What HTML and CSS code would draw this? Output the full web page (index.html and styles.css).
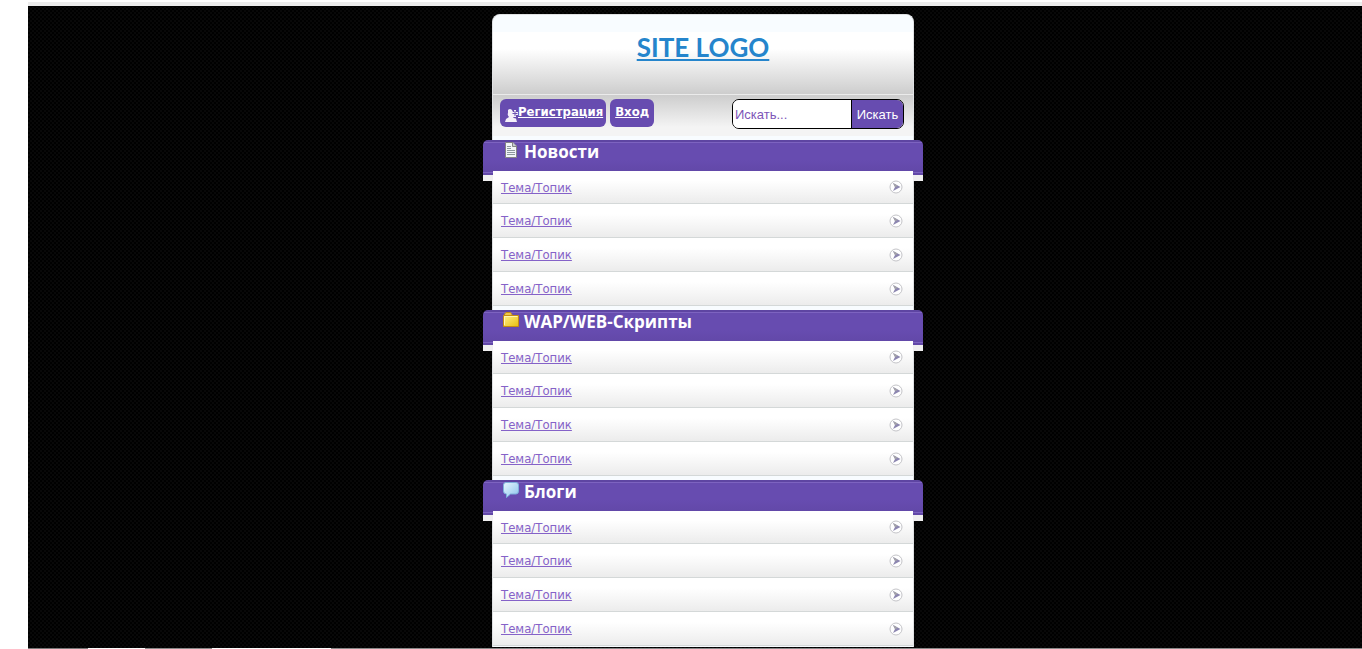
FILE: index.html
```html
<!DOCTYPE html>
<html lang="ru">
<head>
    <meta charset="UTF-8">
    <meta name="viewport" content="width=device-width, initial-scale=1.0">
    <title>Site logo</title>
    <link rel="stylesheet" href="styles.css">
</head>
<body>
    <svg class="sprite" aria-hidden="true">
        <symbol id="arrow" viewBox="0 0 14 14">
            <circle cx="7" cy="7" r="6" fill="#fff" stroke="#c4c4c8" stroke-width="1"/>
            <path d="M4 3L11.500 7L4 11L6 7Z" fill="#8c86b0"/>
            <path d="M4 3L8.500 5.500L7 7H6Z" fill="#a4a4a8"/>
        </symbol>
    </svg>
    <div class="stage">
        <div class="page">
            <div class="header">
                <a href="#" class="logo">SITE LOGO</a>
            </div>
            <div class="panel">
                <div class="user_menu">
                    <a href="#" class="btn">
                        <svg class="user" viewBox="0 0 13 13"><path d="M3 1Q5 -1 7 1L8 3H9V1H11V3H13V6H11V8H8Q8 9 11 9.500L12 13H0L1 10L4 8Q2 6 3 4Z" fill="#f4f0fa"/><path d="M10 2V7M7.500 4.500H12.500" stroke="#6a50b0" stroke-width="1"/></svg>Регистрация</a>
                    <a href="#" class="btn enter">Вход</a>
                </div>
                <form class="search">
                    <input type="text" placeholder="Искать..." aria-label="Искать">
                    <button type="submit">Искать</button>
                </form>
            </div>

            <div class="section">
                <h2 class="title">
                    <svg class="icon" viewBox="0 0 16 16"><path d="M2.500 .5H10L13.500 4V15.500H2.500Z" fill="#f2f6f8" stroke="#858585"/><path d="M9.500 1V4.500H13" fill="#c4ccd0" stroke="#858585"/><path d="M4 4.500H8M4 6.500H8M4 8.500H12M4 10.500H12M4 12.500H12" stroke="#8d989d"/></svg>
                    Новости
                </h2>
                <ul class="list">
                    <li><a href="#">Тема/Топик</a><svg class="arrow"><use href="#arrow"/></svg></li>
                    <li><a href="#">Тема/Топик</a><svg class="arrow"><use href="#arrow"/></svg></li>
                    <li><a href="#">Тема/Топик</a><svg class="arrow"><use href="#arrow"/></svg></li>
                    <li><a href="#">Тема/Топик</a><svg class="arrow"><use href="#arrow"/></svg></li>
                </ul>
            </div>

            <div class="section">
                <h2 class="title">
                    <svg class="icon" viewBox="0 0 16 16"><defs><linearGradient id="gold" x2="1" y2="1"><stop offset="0" stop-color="#fff08a"/><stop offset="1" stop-color="#e8be10"/></linearGradient></defs><path d="M1.500 3V2L3 .5H7.500L9 2.500V4H1.500Z" fill="#ecc64a" stroke="#c48c14"/><path d="M.5 3.500H15.500V14.500H.5Z" fill="url(#gold)" stroke="#c48c14"/><path d="M1.500 13V4.500H14.500" fill="none" stroke="#fff6b0"/></svg>
                    WAP/WEB-Скрипты
                </h2>
                <ul class="list">
                    <li><a href="#">Тема/Топик</a><svg class="arrow"><use href="#arrow"/></svg></li>
                    <li><a href="#">Тема/Топик</a><svg class="arrow"><use href="#arrow"/></svg></li>
                    <li><a href="#">Тема/Топик</a><svg class="arrow"><use href="#arrow"/></svg></li>
                    <li><a href="#">Тема/Топик</a><svg class="arrow"><use href="#arrow"/></svg></li>
                </ul>
            </div>

            <div class="section">
                <h2 class="title">
                    <svg class="icon" viewBox="0 0 16 16"><defs><linearGradient id="sky" x2="1" y2="1"><stop offset="0" stop-color="#e8f7ff"/><stop offset="1" stop-color="#8cc4ec"/></linearGradient></defs><path d="M3 .5H13Q15.500 .5 15.500 3V9Q15.500 12 13 12H7.500L3.500 15.500V12Q.5 12 .5 9V3Q.5 .5 3 .5Z" fill="url(#sky)" stroke="#7fb0dc"/></svg>
                    Блоги
                </h2>
                <ul class="list">
                    <li><a href="#">Тема/Топик</a><svg class="arrow"><use href="#arrow"/></svg></li>
                    <li><a href="#">Тема/Топик</a><svg class="arrow"><use href="#arrow"/></svg></li>
                    <li><a href="#">Тема/Топик</a><svg class="arrow"><use href="#arrow"/></svg></li>
                    <li><a href="#">Тема/Топик</a><svg class="arrow"><use href="#arrow"/></svg></li>
                </ul>
            </div>
        </div>
    </div>
    <div class="strip"></div>
</body>
</html>
```

FILE: styles.css
```css
*{
    margin: 0;
    padding: 0;
    box-sizing: border-box;
}
body{
    padding: 2px 0 0 28px;
    background: #fff;
    font-family: "DejaVu Sans Condensed", "DejaVu Sans", sans-serif;
    font-size: 13px;
}
.sprite{
    position: absolute;
    width: 0;
    height: 0;
}
.stage{
    padding: 8px 0 1px 16px;
    border-top: 4px solid #ececec;
    background: repeating-conic-gradient(#000 0 25%, #080808 0 50%) 0 0 / 4px 4px;
    box-shadow: inset 0 1px 0 #000;
}
.strip{
    height: 1px;
    background: linear-gradient(90deg, #777 60px, #fff 60px 117px, #888 117px 184px, #fff 184px 303px, #888 303px);
}
.page{
    width: 422px;
    max-width: 100%;
    margin: 0 auto;
    background: #f8fcff;
    border: solid #dfe1e3;
    border-width: 1px 1px 0;
    border-radius: 8px 8px 0 0;
}
.header{
    height: 80px;
    padding-top: 15px;
    text-align: center;
    border-bottom: 1px solid #ebebeb;
    background: linear-gradient(#f8fcff 17px, #fff 17px, #fff 34px, #cdcdcd);
    border-radius: 7px 7px 0 0;
}
.logo{
    font: bold 26px/34px "Lato", sans-serif;
    color: #2585cc;
}
.panel{
    height: 41px;
    padding: 4px 9px 0 7px;
    display: flex;
    justify-content: space-between;
    align-items: flex-start;
    background: linear-gradient(#cdcdcd, #f4f4f4 32px);
    margin-bottom: 4px;
}
.user_menu{
    display: flex;
    gap: 4px;
}
.btn{
    height: 28px;
    padding: 0 3px 0 5px;
    line-height: 26px;
    font-weight: bold;
    color: #fff;
    background: #674cb0;
    border-radius: 6px;
}
.enter{
    padding: 0 5px;
}
.user{
    width: 13px;
    height: 13px;
    vertical-align: -6px;
}
.search{
    display: flex;
    width: 172px;
    height: 30px;
    border: 1px solid #000;
    border-radius: 7px;
    overflow: hidden;
}
.search input{
    flex: 1;
    min-width: 0;
    padding: 0 2px;
    border: none;
    background: #fff;
    color: #674cb0;
    font: 13px "Liberation Sans", sans-serif;
}
.search input::placeholder{
    color: #7d55b8;
}
.search button{
    width: 52px;
    border: none;
    border-left: 1px solid #000;
    background: #674cb0;
    color: #fff;
    font: 13px "Liberation Sans", sans-serif;
    cursor: pointer;
}
.section{
    padding-bottom: 4px;
}
.section:last-child{
    padding-bottom: 1px;
}
.title{
    height: 41px;
    margin: 0 -10px -10px;
    padding-left: 20px;
    display: flex;
    gap: 5px;
    font: bold 17px/24px "Open Sans", sans-serif;
    color: #fff;
    background: linear-gradient(#5e45a2 2px, #7d63c0 2px 3px, #674cb0 3px 20px, #6248a8 32px, #7d63c0 32px 33px, #6248a8 33px 35px, #f0eff0 35px);
    border-radius: 5px 5px 0 0;
}
.icon{
    width: 16px;
    height: 16px;
    margin-top: 2px;
}
.list{
    position: relative;
    list-style: none;
}
.list li{
    height: 34px;
    padding: 0 10px 0 8px;
    display: flex;
    justify-content: space-between;
    align-items: center;
    border-bottom: 1px solid #d4d8d8;
    background: linear-gradient(#fff 30%, #ececec);
}
.list li:first-child{
    height: 33px;
}
.list a{
    color: #8562c8;
}
.arrow{
    width: 14px;
    height: 14px;
}
```
